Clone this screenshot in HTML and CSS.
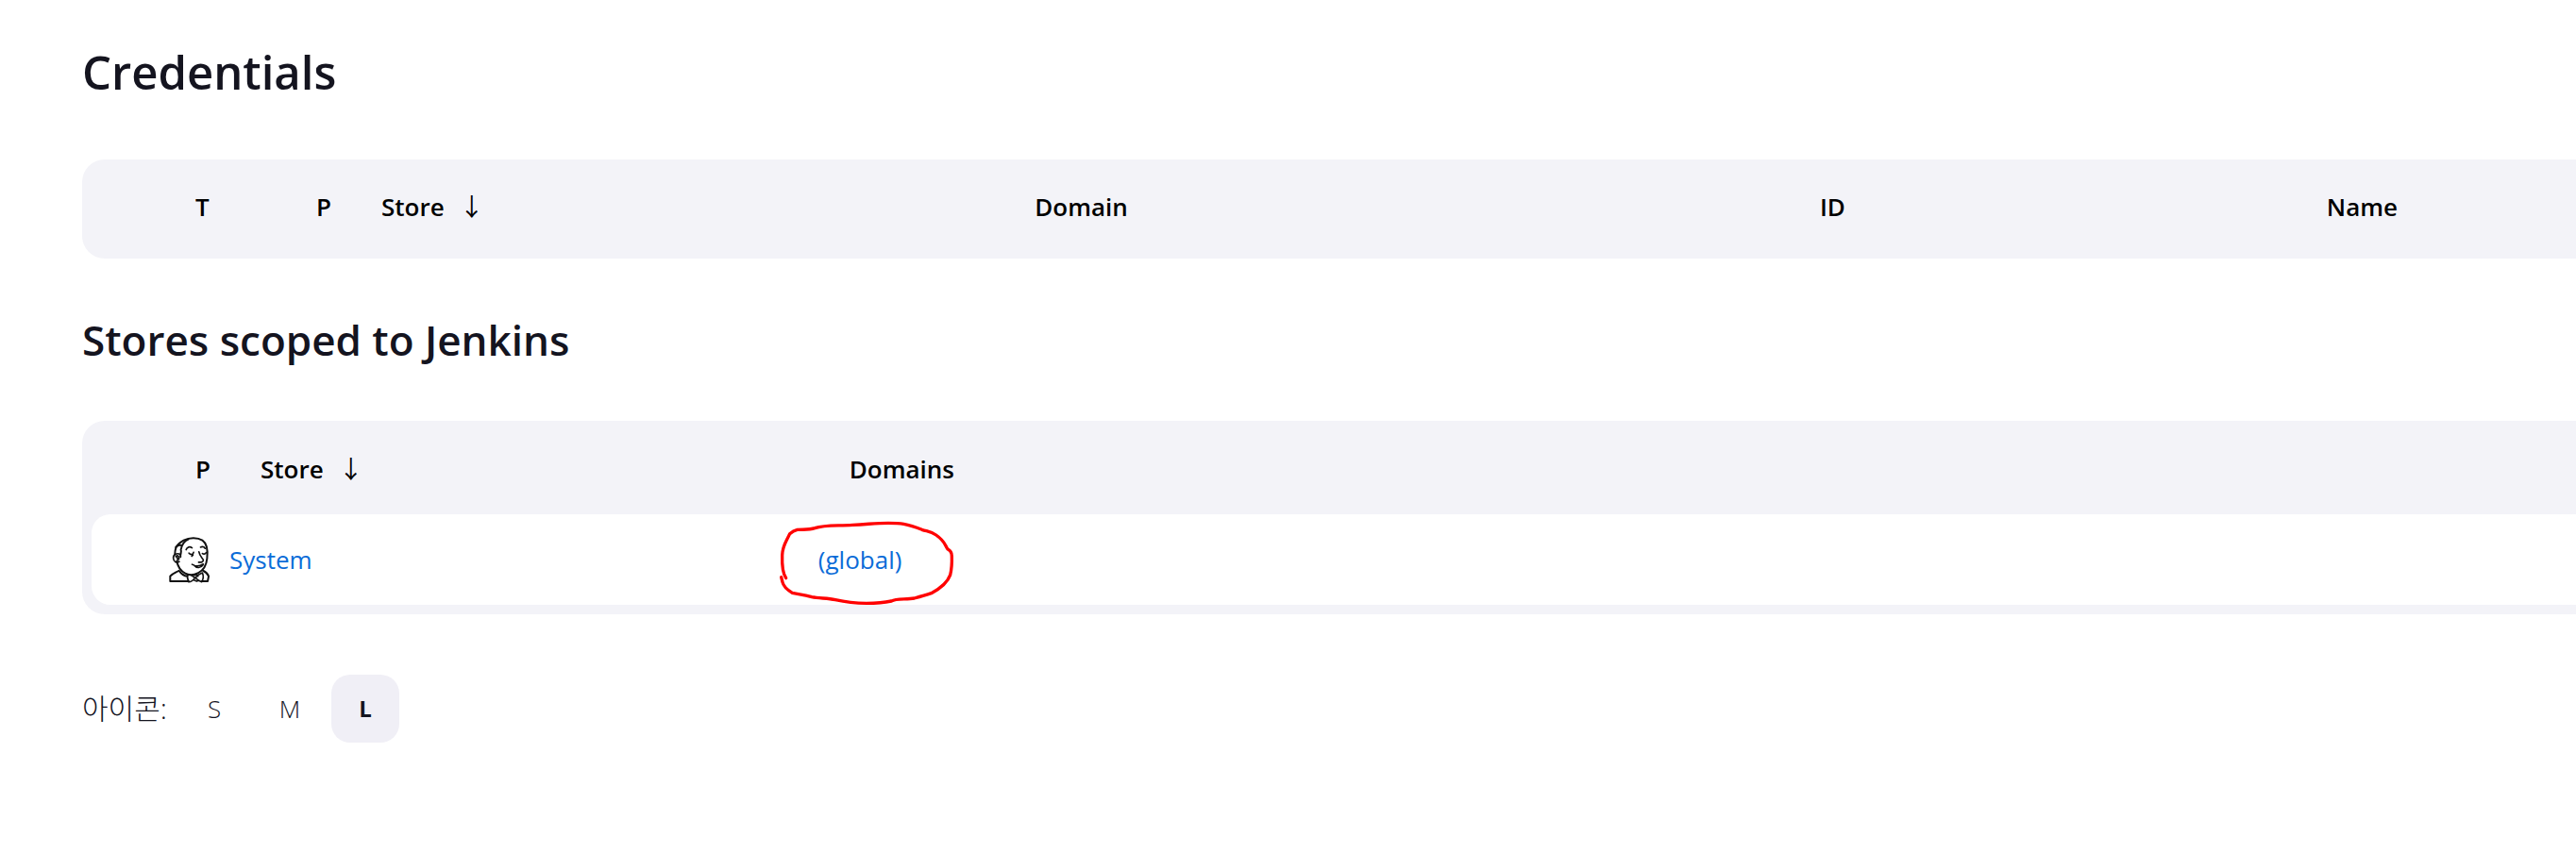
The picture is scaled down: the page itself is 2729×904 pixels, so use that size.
FILE: index.html
```
<!DOCTYPE html>
<html lang="ko">

<head>
    <meta charset="UTF-8">
    <meta name="viewport" content="width=device-width, initial-scale=1.0">
    <title>Credentials [Jenkins]</title>
    <link rel="stylesheet" href="styles.css">
</head>

<body>
    <main>
        <h1>Credentials</h1>

        <div class="panel">
            <table>
                <colgroup>
                    <col class="col-first-wide">
                    <col class="col-icon">
                    <col class="col-store">
                    <col class="col-domain">
                    <col class="col-id">
                    <col>
                </colgroup>
                <thead>
                    <tr>
                        <th class="first">T</th>
                        <th>P</th>
                        <th>Store<span class="arrow">↓</span></th>
                        <th>Domain</th>
                        <th>ID</th>
                        <th>Name</th>
                    </tr>
                </thead>
            </table>
        </div>

        <h2>Stores scoped to Jenkins</h2>

        <div class="panel">
            <table>
                <colgroup>
                    <col class="col-first">
                    <col class="col-scope">
                    <col>
                </colgroup>
                <thead>
                    <tr>
                        <th class="first">P</th>
                        <th>Store<span class="arrow">↓</span></th>
                        <th>Domains</th>
                    </tr>
                </thead>
                <tbody>
                    <tr>
                        <td class="first">
                            <svg class="butler" viewBox="56 55 134 148" aria-hidden="true">
                                <g fill="none" stroke="#111" stroke-width="6" stroke-linecap="round" stroke-linejoin="round">
                                    <path d="M83 132C86 149 96 164 110 172C122 179 139 177 152 170C168 162 178 144 180 124C183 99 181 77 165 66C149 56 123 57 105 66C94 72 86 79 81 88C78 96 77 104 77 111"/>
                                    <path d="M120 63C104 70 98 85 96 96C100 104 93 109 95 119M80 88C87 80 94 80 99 83"/>
                                    <path d="M94 111C84 105 71 111 72 123C73 135 82 139 91 134M80 118C86 112 92 117 90 126M84 121L87 130" stroke-width="5"/>
                                    <path d="M113 96C116 87 125 85 132 90M159 88C165 85 170 86 174 92" stroke-width="5"/>
                                    <path d="M122 107C128 114 136 112 137 104M135 113L131 117M165 108C170 112 175 109 177 105" stroke-width="5"/>
                                    <path d="M154 103C156 115 163 121 168 128C169 136 160 137 153 136M132 143C143 150 156 149 168 142M137 145C147 157 160 155 167 145" stroke-width="5"/>
                                    <path d="M90 163C80 169 68 173 62 181L62 197L121 197M91 164C98 174 109 180 117 181M167 163C177 168 182 173 185 181L182 197L163 197"/>
                                    <path d="M117 175C126 175 134 180 141 186C137 192 130 199 121 199C118 192 116 183 117 175ZM144 184C149 178 156 174 165 170C169 179 168 190 163 199C155 196 149 193 145 188ZM139 178L147 175L151 181M138 193L147 197L154 194" stroke-width="5"/>
                                </g>
                            </svg>
                        </td>
                        <td><a href="#system">System</a></td>
                        <td class="marked">
                            <a href="#global">(global)</a>
                            <svg class="scribble" viewBox="135 363 558 270" aria-hidden="true">
                                <path d="M158 548C146 530 145 505 146 475C147 445 157 436 170 407Q181 397 194 394C220 393 232 395 250 389C280 378 315 382 370 379C420 377 440 373 483 373C520 373 542 374 590 394C608 400 618 399 635 411C665 432 662 442 672 456Q685 462 685 478C686 510 684 522 680 538C672 560 646 582 620 596C600 603 585 607 566 612C540 617 510 612 493 621C465 627 440 628 414 628C370 628 345 624 315 617C290 611 265 613 240 608C215 600 195 599 178 595C165 587 150 575 147 561L143 545"/>
                            </svg>
                        </td>
                    </tr>
                </tbody>
            </table>
        </div>

        <div class="icon-size">
            <span class="label">아이콘:</span>
            <a href="#small">S</a>
            <a href="#medium">M</a>
            <a href="#large" class="selected">L</a>
        </div>
    </main>
</body>

</html>
```
FILE: styles.css
```
* {
    box-sizing: border-box;
}

body {
    margin: 0;
    background-color: #fff;
    color: #14141f;
    font-family: "Open Sans", "Noto Sans CJK KR", sans-serif;
    font-size: 26px;
    line-height: 36px;
}

main {
    padding: 40px 0 40px 87px;
}

h1, h2 {
    margin: 0;
    font-weight: 600;
}

h1 {
    font-size: 49px;
    line-height: 72px;
    margin-bottom: 57px;
}

h2 {
    font-size: 44px;
    line-height: 64px;
    margin: 54px 0;
}

.panel {
    padding: 0 0 10px 10px;
    border-radius: 24px 0 0 24px;
    background-color: #f3f3f8;
}

table {
    width: 100%;
    table-layout: fixed;
    border-spacing: 0;
}

th {
    height: 99px;
    padding: 2px 0 0 57px;
    color: #000;
    font-weight: 600;
    text-align: left;
    white-space: nowrap;
}

thead:last-child th {
    height: 95px;
    padding-top: 4px;
}

td {
    height: 96px;
    padding: 0 0 0 24px;
    background-color: #fff;
}

th.first {
    padding-left: 110px;
}

td.first {
    padding-left: 81px;
    border-radius: 20px 0 0 20px;
}

.col-first {
    width: 122px;
}

.col-first-wide {
    width: 181px;
}

.col-icon {
    width: 69px;
}

.col-store {
    width: 26.3%;
}

.col-domain {
    width: 31.6%;
}

.col-id {
    width: 20.4%;
}

.col-scope {
    width: 23.7%;
}

.arrow {
    margin-left: 16px;
    font-family: "Noto Sans CJK KR", sans-serif;
    font-weight: 400;
    line-height: 1;
}

a {
    color: #0b6cd8;
    text-decoration: none;
}

.butler {
    display: block;
    width: 45px;
    height: 49px;
}

.marked {
    position: relative;
}

/* hand-drawn mark around the link */
.scribble {
    position: absolute;
    top: 6px;
    left: -18px;
    width: 186px;
    height: 90px;
    fill: none;
    stroke: #f00;
    stroke-width: 10;
    stroke-linecap: round;
    stroke-linejoin: round;
    pointer-events: none;
}

.icon-size {
    display: flex;
    align-items: center;
    gap: 8px;
    margin-top: 64px;
}

.icon-size .label {
    width: 96px;
    font-size: 30px;
    font-weight: 300;
    white-space: nowrap;
}

.icon-size a {
    width: 72px;
    height: 72px;
    border-radius: 20px;
    color: #14141f;
    font-weight: 300;
    line-height: 72px;
    text-align: center;
}

.icon-size .selected {
    background-color: #f0eff6;
    font-size: 24px;
    font-weight: 700;
}
```
